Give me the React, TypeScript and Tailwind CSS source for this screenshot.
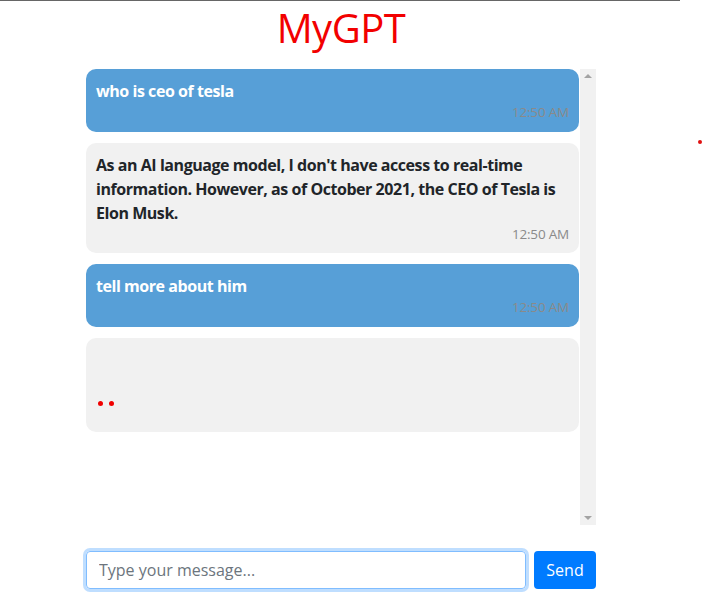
import React from "react";

const font = { fontFamily: '"Open Sans", "Noto Sans", Arial, sans-serif' };

function Bubble({ text, user }: { text: string; user?: boolean }) {
  return (
    <div
      className={`rounded-[10px] px-[10px] pt-[10px] pb-[10px] ${user ? "bg-[#579fd7] text-white" : "bg-[#f1f1f1] text-[#212529]"}`}
    >
      <div className="text-[16px] font-bold leading-[24px] tracking-[-0.45px]">{text}</div>
      <div className="text-right text-[13.5px] leading-[18.5px] text-[#8a8a8a] tracking-[-0.2px]">12:50 AM</div>
    </div>
  );
}

export default function App() {
  return (
    <div className="relative w-[704px] h-[608px] bg-white" style={font}>
      <div className="w-[680px] h-px bg-[#666]" />
      <div className="absolute left-[698px] top-[140px] w-[4px] h-[4px] rounded-full bg-[#e01010]" />
      <h1 className="w-[682px] text-center text-[40px] font-medium leading-[52px] text-[#f20000] mt-[1px] tracking-[-0.5px]">MyGPT</h1>
      <div className="ml-[86px] w-[510px] mt-[15px] flex h-[456px]">
        <div className="flex-1 flex flex-col gap-[11px] pr-[1px]">
          <Bubble user text="who is ceo of tesla" />
          <Bubble text="As an AI language model, I don't have access to real-time information. However, as of October 2021, the CEO of Tesla is Elon Musk." />
          <Bubble user text="tell more about him" />
          <div className="h-[94px] rounded-[10px] bg-[#f1f1f1] flex items-start gap-[6px] pl-[12px] pt-[63px]">
            <span className="w-[5px] h-[5px] rounded-full bg-[#f00000]" />
            <span className="w-[5px] h-[5px] rounded-full bg-[#f00000]" />
          </div>
        </div>
        <div className="w-[16px] bg-[#f1f1f1] flex flex-col justify-between items-center py-[5px]">
          <div className="w-0 h-0 border-l-[4px] border-r-[4px] border-b-[4px] border-l-transparent border-r-transparent border-b-[#a3a3a3]" />
          <div className="w-0 h-0 border-l-[4px] border-r-[4px] border-t-[4px] border-l-transparent border-r-transparent border-t-[#a3a3a3]" />
        </div>
      </div>
      <div className="ml-[86px] w-[510px] mt-[26px] flex gap-[8px]">
        <input
          className="flex-1 h-[38px] rounded-[4px] border border-[#80bdff] px-[12px] text-[16px] text-[#495057] outline-none shadow-[0_0_0_3px_rgba(0,123,255,0.25)] placeholder:text-[#6c757d]"
          placeholder="Type your message..."
          style={font}
        />
        <button className="h-[38px] w-[62px] rounded-[4px] bg-[#007bff] text-white text-[16px]" style={font}>
          Send
        </button>
      </div>
    </div>
  );
}
